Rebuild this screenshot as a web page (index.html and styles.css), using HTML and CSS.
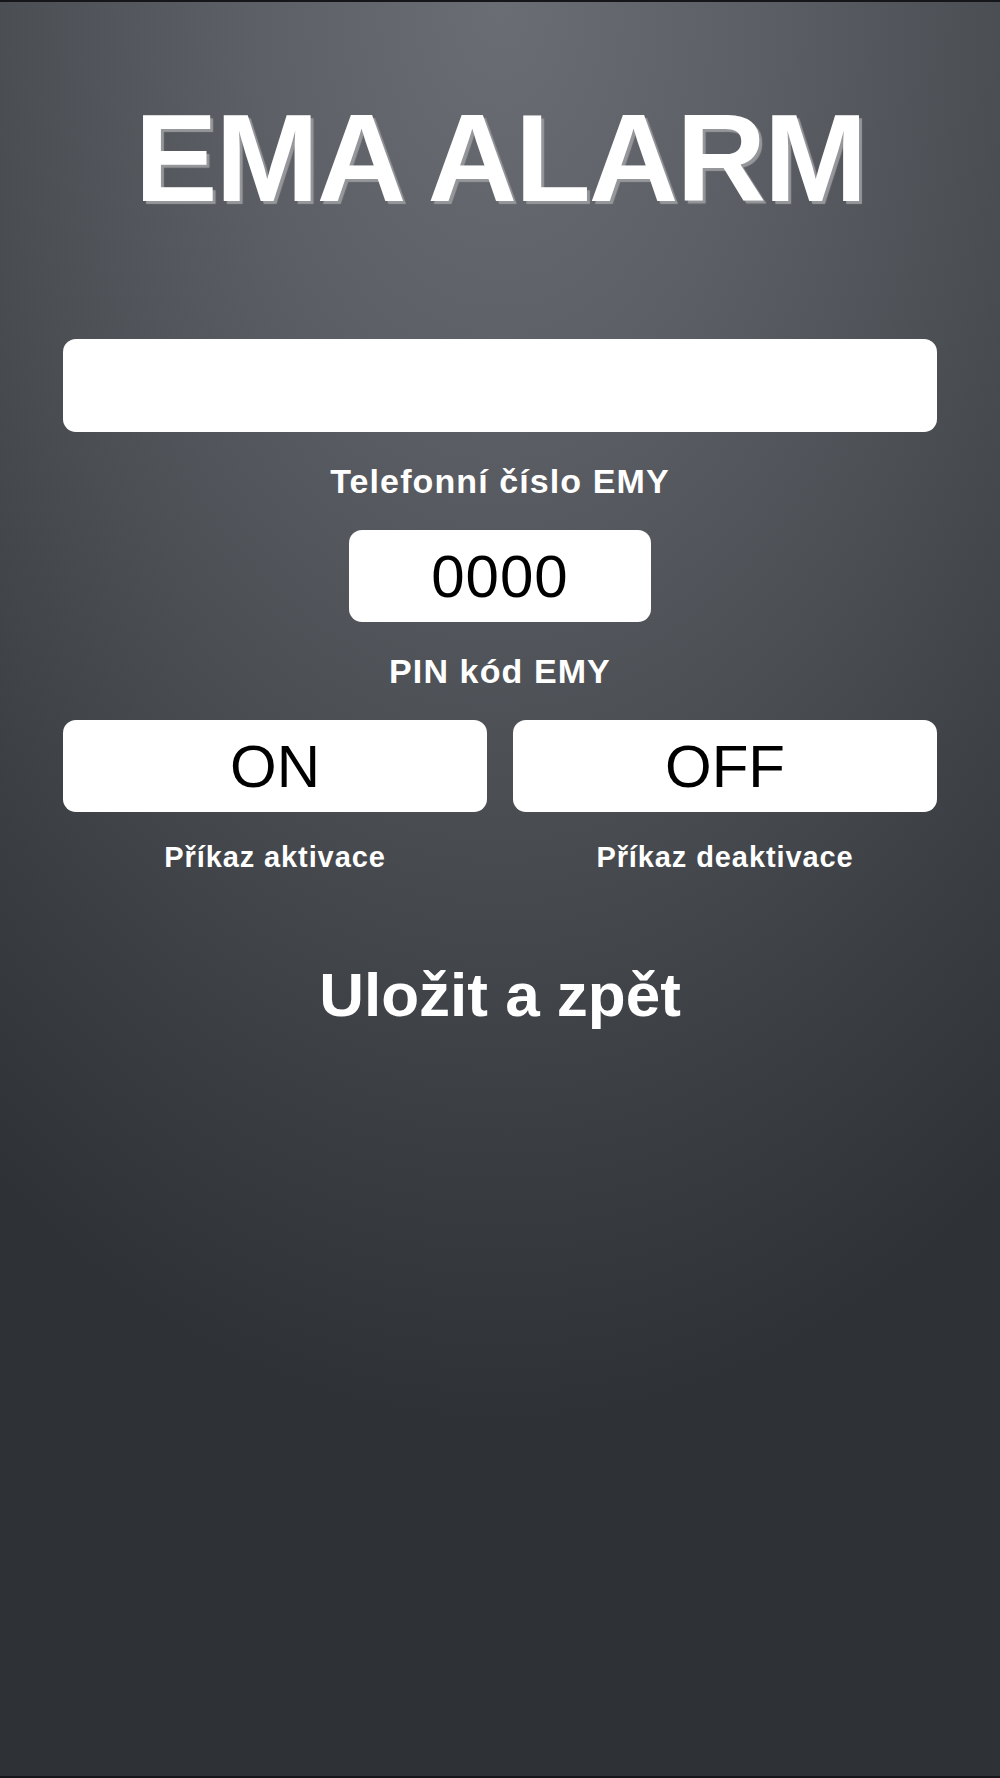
FILE: index.html
```html
<!DOCTYPE html>
<html lang="cs">
<head>
<meta charset="utf-8">
<title>EMA ALARM</title>
<link rel="stylesheet" href="styles.css">
</head>
<body>
<main class="screen">
  <h1 class="title">EMA ALARM</h1>
  <div class="field field-wide"></div>
  <p class="label">Telefonní číslo EMY</p>
  <div class="field field-pin">0000</div>
  <p class="label">PIN kód EMY</p>
  <div class="commands">
    <div class="command">
      <div class="field field-cmd">ON</div>
      <p class="label-small">Příkaz aktivace</p>
    </div>
    <div class="command">
      <div class="field field-cmd">OFF</div>
      <p class="label-small">Příkaz deaktivace</p>
    </div>
  </div>
  <p class="save">Uložit a zpět</p>
</main>
</body>
</html>
```
FILE: styles.css
```css
html, body {
  margin: 0;
  padding: 0;
}

body {
  width: 1000px;
  height: 1778px;
  overflow: hidden;
  background: #2e3136;
  font-family: "Liberation Sans", Arial, sans-serif;
}

.screen {
  box-sizing: border-box;
  width: 1000px;
  height: 1778px;
  border-top: 2px solid #15161a;
  border-bottom: 2px solid #15161a;
  background:
    radial-gradient(ellipse 90% 80% at 50% 0%, #6a6d73 0%, #5c5f65 28%, #4b4e53 55%, #3a3d42 80%, #2e3136 100%);
  display: flex;
  flex-direction: column;
  align-items: center;
}

.title {
  margin: 94px 0 0;
  font-size: 124px;
  line-height: 124px;
  font-weight: bold;
  letter-spacing: -2px;
  color: #ffffff;
  text-shadow: 3px 3px 1px #96979b;
}

.field {
  background: #ffffff;
  border-radius: 13px;
  color: #000000;
  font-size: 60px;
  font-weight: normal;
  display: flex;
  align-items: center;
  justify-content: center;
  box-sizing: border-box;
}

.field-wide {
  width: 874px;
  height: 93px;
  margin-top: 119px;
}

.field-pin {
  width: 302px;
  height: 92px;
  margin-top: 29px;
  letter-spacing: 1px;
}

.label {
  margin: 29px 0 0;
  color: #ffffff;
  font-size: 34px;
  line-height: 40px;
  font-weight: bold;
  letter-spacing: 1.1px;
}

.commands {
  width: 874px;
  display: grid;
  grid-template-columns: 1fr 1fr;
  column-gap: 26px;
  margin-top: 29px;
}

.command {
  display: flex;
  flex-direction: column;
  align-items: center;
}

.field-cmd {
  width: 100%;
  height: 92px;
}

.label-small {
  margin: 28px 0 0;
  color: #ffffff;
  font-size: 29px;
  line-height: 34px;
  font-weight: bold;
  letter-spacing: 0.9px;
}

.save {
  margin: 85px 0 0;
  color: #ffffff;
  font-size: 62px;
  line-height: 72px;
  font-weight: bold;
}
```
